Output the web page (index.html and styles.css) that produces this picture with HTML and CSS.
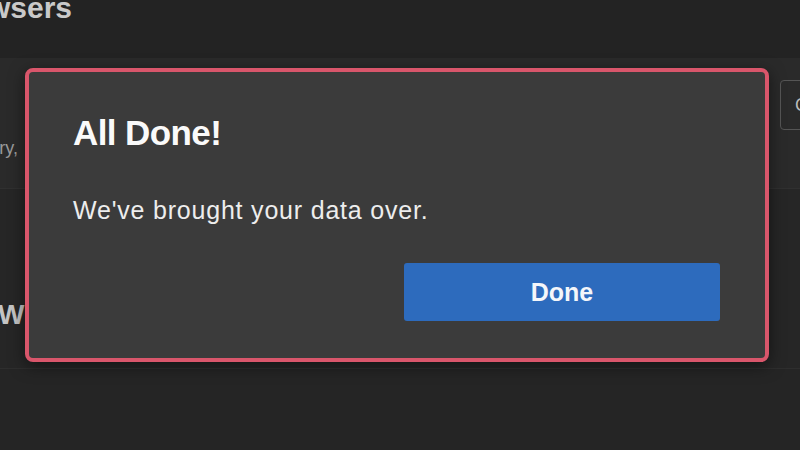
FILE: index.html
```html
<!DOCTYPE html>
<html lang="en">
<head>
    <meta charset="UTF-8">
    <meta name="viewport" content="width=device-width, initial-scale=1.0">
    <title>Import Browser Data</title>
    <link rel="stylesheet" href="styles.css">
</head>
<body>
    <div class="page">
        <header class="page-head">
            <h1 class="page-title">Import from other browsers</h1>
        </header>

        <section class="import-card">
            <p class="card-desc">Import favorites, passwords, history,</p>
            <button class="outline-btn" type="button">Choose what to import</button>
        </section>

        <section class="import-row">
            <h2 class="row-title">Where else to import from</h2>
        </section>

        <section class="import-rest"></section>
    </div>

    <div class="dialog" role="dialog" aria-labelledby="dialogTitle">
        <h2 id="dialogTitle" class="dialog-title">All Done!</h2>
        <p class="dialog-text">We've brought your data over.</p>
        <div class="dialog-actions">
            <button class="primary-btn" type="button">Done</button>
        </div>
    </div>
</body>
</html>
```

FILE: styles.css
```css
* {
    box-sizing: border-box;
}
body {
    margin: 0;
    width: 800px;
    height: 450px;
    overflow: hidden;
    background: #232323;
    font-family: "Liberation Sans", Arial, sans-serif;
    color: #e8e8e8;
    position: relative;
}
.page {
    display: flex;
    flex-direction: column;
    height: 100%;
}
.page-head {
    height: 58px;
    overflow: hidden;
    white-space: nowrap;
}
.page-title {
    width: 420px;
    margin: -7px 0 0 -348px;
    text-align: right;
    font-size: 30px;
    line-height: 30px;
    font-weight: bold;
    color: #c9c9c9;
}
.import-card {
    height: 130px;
    background: #2a2a2a;
    display: flex;
    justify-content: space-between;
    align-items: flex-start;
    overflow: hidden;
    white-space: nowrap;
}
.card-desc {
    width: 340px;
    margin: 81px 0 0 -322px;
    text-align: right;
    font-size: 18px;
    line-height: 18px;
    color: #9a9a9a;
}
.outline-btn {
    margin: 22px -200px 0 0;
    width: 220px;
    height: 50px;
    padding: 0 0 0 14px;
    text-align: left;
    background: transparent;
    border: 1px solid #555;
    border-radius: 4px;
    color: #bbb;
    font-family: inherit;
    font-size: 18px;
}
.import-row {
    height: 180px;
    background: #262626;
    border-top: 1px solid #303030;
    overflow: hidden;
    white-space: nowrap;
}
.row-title {
    margin: 112px 0 0 -2px;
    font-size: 28px;
    line-height: 28px;
    font-weight: bold;
    color: #c4c4c4;
}
.import-rest {
    flex: 1;
    background: #252525;
    border-top: 1px solid #2e2e2e;
}
.dialog {
    position: absolute;
    left: 25px;
    top: 68px;
    width: 744px;
    height: 294px;
    padding: 43px 45px 0 44px;
    background: #3b3b3b;
    border: 4px solid #d9566b;
    border-radius: 8px;
    box-shadow: 0 4px 16px rgba(0, 0, 0, 0.5);
}
.dialog-title {
    margin: 0;
    font-size: 35px;
    line-height: 35px;
    font-weight: bold;
    letter-spacing: -0.6px;
    color: #fafafa;
}
.dialog-text {
    margin: 48px 0 0;
    font-size: 25px;
    line-height: 25px;
    letter-spacing: 0.8px;
    color: #ededed;
}
.dialog-actions {
    display: flex;
    justify-content: flex-end;
    margin-top: 40px;
}
.primary-btn {
    width: 316px;
    height: 58px;
    background: #2d6bbd;
    border: none;
    border-radius: 3px;
    color: #f4f6fa;
    font-family: inherit;
    font-size: 25px;
    font-weight: bold;
    cursor: pointer;
}
```
